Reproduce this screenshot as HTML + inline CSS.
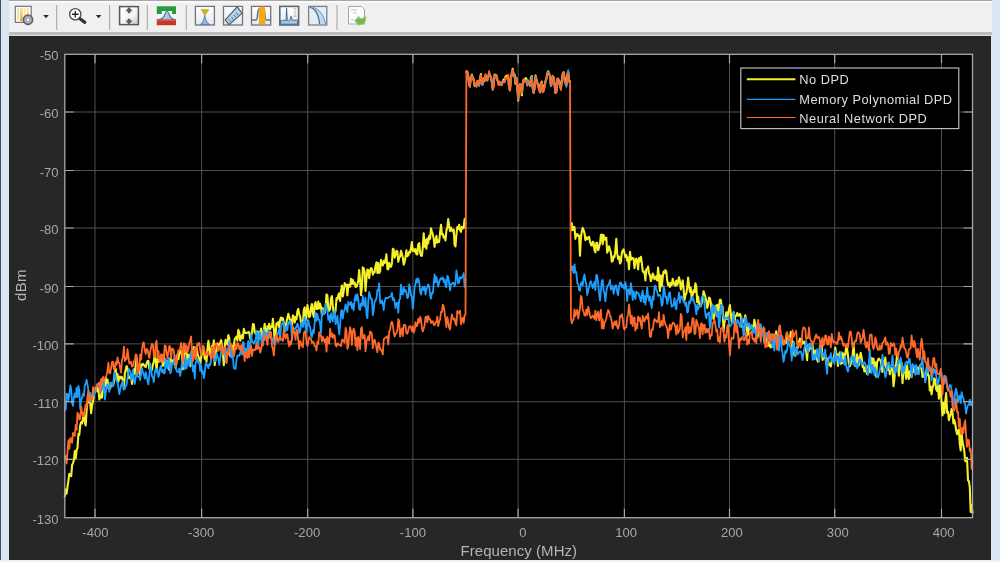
<!DOCTYPE html>
<html><head><meta charset="utf-8"><title>Spectrum Analyzer</title>
<style>
html,body{margin:0;padding:0;}
body{width:1000px;height:562px;overflow:hidden;position:relative;background:#dbe6f4;font-family:"Liberation Sans",Arial,sans-serif;}
#lb{position:absolute;left:0;top:0;width:1px;height:562px;background:#474e56;}
#tbar{position:absolute;left:9px;top:0;width:983px;height:33px;background:#f0f0f0;}
#tline0{position:absolute;left:9px;top:0;width:983px;height:3.4px;background:linear-gradient(#a4a4a4 0,#a8a8a8 22%,#f6f6f6 32%,#f9f9f9 80%,#f0f0f0 100%);}
#tline{position:absolute;left:9px;top:32.4px;width:983px;height:3.8px;background:linear-gradient(#d0d0d0 0%,#b6b6b6 20%,#b9b9b9 58%,#d9d9d9 72%,#dcdcdc 100%);}
#fig{position:absolute;left:9.3px;top:36px;width:982.2px;height:523.8px;background:#272727;}
#bot{position:absolute;left:0;top:559.8px;width:1000px;height:3px;background:#eef2f8;}
</style></head><body>
<div id="lb"></div>
<div id="tbar"></div><div id="tline0"></div><div id="tline"></div>
<div id="fig"></div>
<div id="bot"></div>
<svg width="1000" height="36" viewBox="0 0 1000 36" style="position:absolute;left:0;top:0">
<defs>
<linearGradient id="gy" x1="0" x2="0" y1="0" y2="1"><stop offset="0" stop-color="#fbe98a"/><stop offset="1" stop-color="#f0a040"/></linearGradient>
<linearGradient id="gp" x1="0" x2="1" y1="0" y2="0"><stop offset="0" stop-color="#fefefa"/><stop offset="0.5" stop-color="#fdf6d8"/><stop offset="1" stop-color="#fffef6"/></linearGradient>
<linearGradient id="gw" x1="0" x2="1" y1="0" y2="1"><stop offset="0" stop-color="#ffffff"/><stop offset="0.6" stop-color="#f4f4f4"/><stop offset="1" stop-color="#c4c4c4"/></linearGradient>
<linearGradient id="gb" x1="0" x2="0" y1="0" y2="1"><stop offset="0" stop-color="#ffffff"/><stop offset="1" stop-color="#e2ebf3"/></linearGradient>
</defs>
<!-- separators -->
<path d="M56.700 5V30M109.600 5V30M147.300 5V30M186.300 5V30M337 5V30" stroke="#a9a9a9" stroke-width="1.1"/>
<!-- icon1: settings -->
<rect x="15.300" y="6.300" width="15.900" height="16.100" fill="url(#gp)" stroke="#74748a" stroke-width="1.200"/>
<rect x="17.600" y="8" width="0.900" height="12.500" fill="#d2c688"/>
<rect x="20" y="8" width="2.600" height="13" fill="url(#gy)"/>
<rect x="24" y="8" width="1.200" height="8" fill="#f8e29a"/>
<rect x="27" y="8" width="1.300" height="7" fill="#f4d478"/>
<circle cx="28" cy="19.750" r="4.700" fill="#98989e" stroke="#5e5e66" stroke-width="1.500"/>
<circle cx="28" cy="19.750" r="2.900" fill="none" stroke="#b8b8c0" stroke-width="1"/>
<circle cx="28" cy="19.750" r="1.500" fill="#f2f2fa"/>
<!-- dropdown arrows -->
<path d="M43.200 15.100h5.600l-2.800 3.200z" fill="#2a2a2a"/>
<path d="M95.800 15.100h5.600l-2.800 3.200z" fill="#2a2a2a"/>
<!-- zoom -->
<circle cx="75.250" cy="14.250" r="5.600" fill="#fbfbfb" stroke="#505050" stroke-width="1.400"/>
<path d="M72 14.250h6.500M75.250 11v6.500" stroke="#222" stroke-width="1.300"/>
<path d="M80 18.800l4.800 3.600" stroke="#333" stroke-width="3.200" stroke-linecap="round"/>
<!-- autoscale -->
<rect x="119.600" y="6.600" width="18.800" height="18" fill="url(#gw)" stroke="#585858" stroke-width="1.500"/>
<path d="M129 6.900l3.600 4.400h-2.300v2h-2.600v-2h-2.300zM129 24.500l3.600-4h-2.300v-1.800h-2.600v1.800h-2.300z" fill="#5a5a5a"/>
<!-- spectral mask -->
<rect x="156.750" y="6.250" width="19.250" height="19" fill="#f4fbf6"/>
<path d="M156.750 6.250h19.250v7.800h-4v-3h-10.250v3h-5z" fill="#2a9a3e"/>
<path d="M157.500 19.600C162 19.600 163.300 18 164.300 15.500C165.300 13 165.800 11.300 167 11.300C168.200 11.300 168.700 13 169.700 15.500C170.700 18 172 19.600 175.500 19.600v0.500h-18z" fill="#a9c8e6" stroke="#4c6c90" stroke-width="1.100"/>
<rect x="156.750" y="19.600" width="19.250" height="5.650" fill="#c43a2a"/>
<rect x="156.750" y="19.600" width="19.250" height="0.900" fill="#d87a6a"/>
<!-- peak finder -->
<rect x="195.400" y="6.400" width="19" height="18.600" fill="url(#gb)" stroke="#74747c" stroke-width="1.300"/>
<path d="M200.500 24.300c2.500-1 3.500-5 4.250-9c0.750 4 1.750 8 4.750 9z" fill="#9bbcdc" stroke="#4a78a8" stroke-width="0.900"/>
<path d="M201 9.400h7.800l-3.900 6.200z" fill="#cdb422" stroke="#a89418" stroke-width="0.500"/>
<!-- cursor ruler -->
<rect x="223.500" y="6.400" width="19" height="18.600" fill="url(#gb)" stroke="#74747c" stroke-width="1.300"/>
<path d="M225.200 19.800L237.200 6.800l5 6.300L229 24.600z" fill="#b4d2e8" stroke="#505a66" stroke-width="1.100"/>
<path d="M230.800 21.600l-1.700-2.200M233.200 19.400l-1.700-2.200M235.600 17.200l-1.700-2.200M238 15l-1.700-2.200" stroke="#3f6490" stroke-width="1"/>
<!-- channel measurements -->
<rect x="251.500" y="6.400" width="19.200" height="18.600" fill="url(#gb)" stroke="#74747c" stroke-width="1.300"/>
<path d="M252 20h4c2.300 0 0.800-11.500 3.500-11.500h3.500c2.700 0 1.200 11.500 3.500 11.500h4" fill="none" stroke="#54708e" stroke-width="1.500"/>
<path d="M258.800 24.500V9.500c0-2 1.500-3 3.300-3s3.300 1 3.300 3V24.500z" fill="#f5a81c"/>
<!-- distortion -->
<rect x="279.800" y="6.400" width="18.800" height="18.600" fill="url(#gb)" stroke="#5a6878" stroke-width="1.600"/>
<path d="M280.600 24.200v-3.800l1.500 .6 1.500-1 1.500 .8 .9-.6 .6-12 .7 12.200 1.300 .6 1.200-.8 1.200-4 1.200 4.200 1.400-.8 1.400 1 1.400-.8 1.200 .6v3.800z" fill="#a8c8e2" stroke="#3f6288" stroke-width="0.900"/>
<path d="M293.500 8.300h3M295 8.300v8M293.500 16.300h3" stroke="#e6a888" stroke-width="0.900" fill="none"/>
<!-- ccdf -->
<rect x="308.600" y="6.400" width="18.200" height="18.600" fill="#e6ecf2" stroke="#7c8088" stroke-width="1.300"/>
<path d="M310 7.400c5 1 8.500 7 9.600 16.600h6c-1.500-9-6.500-15-12.600-16.600z" fill="#bcdaf0"/>
<path d="M310 7.400c5 1 8.500 7 9.600 16.600" fill="none" stroke="#3f6e96" stroke-width="1.200"/>
<path d="M313 7.400c6 1.600 11 7.600 12.600 16.600" fill="none" stroke="#5f8fbe" stroke-width="1"/>
<!-- doc -->
<path d="M348.500 6.500h13l3 3v14.500h-16z" fill="#fcfcfc" stroke="#a6a6a6" stroke-width="1"/>
<path d="M351 10h6M353.500 13h3M351 19.800h2.500" stroke="#bdbdbd" stroke-width="1"/>
<path d="M354.800 20.800l4.200-4.600v2.300h3.600l3-2.600v5.200l-3 3.400h-3.600v1.300z" fill="#78b450" stroke="#9ccc78" stroke-width="0.900"/>
</svg>

<svg width="983" height="524" viewBox="9 36 983 524" style="position:absolute;left:9px;top:36px;will-change:transform">
<rect x="64.8" y="54.3" width="907.7" height="463.4" fill="#000"/>
<path d="M95.0 54.3V517.7M201.6 54.3V517.7M307.7 54.3V517.7M412.9 54.3V517.7M518.1 54.3V517.7M624.4 54.3V517.7M729.5 54.3V517.7M834.7 54.3V517.7M941.5 54.3V517.7M64.8 459.3H972.5M64.8 401.7H972.5M64.8 343.9H972.5M64.8 286.5H972.5M64.8 228.0H972.5M64.8 170.5H972.5M64.8 112.0H972.5" stroke="#505050" stroke-width="1.0" fill="none"/>
<defs><filter id="bl" x="-2%" y="-2%" width="104%" height="104%"><feGaussianBlur stdDeviation="0.35"/></filter></defs>
<g fill="none" stroke-linejoin="round" stroke-linecap="round" filter="url(#bl)">
<polyline stroke="#f4f02c" stroke-width="2.1" points="64.8,496.3 65.7,489.4 66.6,493.7 67.5,487.0 68.4,480.7 69.3,473.9 70.3,475.5 71.2,476.1 72.1,465.0 73.0,463.1 73.9,460.1 74.8,451.1 75.7,458.3 76.6,450.0 77.5,448.0 78.4,433.9 79.3,434.9 80.2,425.3 81.2,422.0 82.1,423.3 83.0,418.1 83.9,413.3 84.8,421.7 85.7,425.5 86.6,410.3 87.5,401.6 88.4,402.1 89.3,399.6 90.2,402.3 91.1,413.2 92.1,405.2 93.0,401.5 93.9,395.1 94.8,391.1 95.7,389.6 96.6,387.4 97.5,391.4 98.4,387.9 99.3,399.5 100.2,392.0 101.1,397.7 102.1,397.4 103.0,384.3 103.9,388.7 104.8,384.9 105.7,377.3 106.6,386.2 107.5,379.5 108.4,388.3 109.3,387.0 110.2,388.4 111.1,383.3 112.0,384.8 113.0,386.0 113.9,382.2 114.8,372.1 115.7,368.8 116.6,379.0 117.5,374.1 118.4,381.6 119.3,376.5 120.2,378.5 121.1,376.7 122.0,377.2 123.0,381.9 123.9,389.3 124.8,373.6 125.7,369.7 126.6,366.0 127.5,368.4 128.4,377.8 129.3,378.2 130.2,376.9 131.1,374.9 132.0,384.0 132.9,372.8 133.9,369.3 134.8,374.1 135.7,365.4 136.6,358.1 137.5,365.0 138.4,366.0 139.3,369.6 140.2,376.6 141.1,364.3 142.0,365.4 142.9,363.9 143.8,364.8 144.8,366.3 145.7,367.0 146.6,363.6 147.5,361.1 148.4,360.8 149.3,369.0 150.2,369.6 151.1,369.6 152.0,369.9 152.9,364.9 153.8,361.8 154.8,353.7 155.7,360.7 156.6,370.5 157.5,359.3 158.4,360.3 159.3,361.7 160.2,359.9 161.1,357.6 162.0,358.6 162.9,365.8 163.8,355.0 164.7,363.4 165.7,364.8 166.6,361.3 167.5,360.9 168.4,366.9 169.3,370.0 170.2,358.2 171.1,360.0 172.0,361.7 172.9,360.2 173.8,361.6 174.7,359.1 175.7,368.2 176.6,361.5 177.5,354.7 178.4,359.3 179.3,353.1 180.2,351.0 181.1,352.1 182.0,355.6 182.9,369.1 183.8,356.5 184.7,352.7 185.6,347.6 186.6,353.6 187.5,362.5 188.4,354.9 189.3,354.5 190.2,366.2 191.1,356.0 192.0,353.0 192.9,350.3 193.8,346.9 194.7,352.3 195.6,357.8 196.5,346.9 197.5,353.5 198.4,356.7 199.3,359.0 200.2,363.3 201.1,357.2 202.0,353.4 202.9,350.4 203.8,350.5 204.7,358.7 205.6,356.7 206.5,361.7 207.5,348.5 208.4,340.8 209.3,348.2 210.2,354.3 211.1,349.9 212.0,345.9 212.9,349.9 213.8,340.4 214.7,365.2 215.6,358.0 216.5,349.6 217.4,343.2 218.4,345.6 219.3,345.2 220.2,342.9 221.1,340.1 222.0,347.1 222.9,354.5 223.8,365.2 224.7,346.3 225.6,339.7 226.5,343.0 227.4,344.6 228.3,335.1 229.3,338.0 230.2,356.2 231.1,346.5 232.0,345.7 232.9,352.4 233.8,346.1 234.7,339.2 235.6,337.9 236.5,336.7 237.4,340.4 238.3,329.9 239.3,332.4 240.2,340.6 241.1,337.6 242.0,335.1 242.9,338.4 243.8,328.8 244.7,331.9 245.6,333.0 246.5,333.0 247.4,332.7 248.3,332.0 249.2,332.3 250.2,338.8 251.1,336.4 252.0,332.5 252.9,324.0 253.8,324.5 254.7,332.0 255.6,333.7 256.5,331.7 257.4,331.5 258.3,332.2 259.2,338.7 260.2,332.1 261.1,328.6 262.0,339.5 262.9,336.4 263.8,330.4 264.7,323.9 265.6,334.4 266.5,338.4 267.4,326.4 268.3,329.0 269.2,323.9 270.1,329.2 271.1,326.5 272.0,327.0 272.9,318.9 273.8,328.6 274.7,339.8 275.6,334.1 276.5,323.3 277.4,324.7 278.3,322.1 279.2,327.1 280.1,320.0 281.0,317.5 282.0,320.0 282.9,318.2 283.8,322.7 284.7,330.1 285.6,326.0 286.5,322.1 287.4,318.0 288.3,313.9 289.2,317.1 290.1,320.7 291.0,319.8 292.0,325.0 292.9,315.4 293.8,316.7 294.7,322.5 295.6,317.0 296.5,319.3 297.4,311.2 298.3,308.9 299.2,314.3 300.1,316.4 301.0,322.5 301.9,321.9 302.9,323.6 303.8,310.1 304.7,307.4 305.6,320.3 306.5,314.4 307.4,305.1 308.3,310.5 309.2,317.1 310.1,316.1 311.0,307.8 311.9,304.1 312.9,313.3 313.8,317.0 314.7,304.1 315.6,302.1 316.5,308.9 317.4,308.9 318.3,301.6 319.2,308.4 320.1,303.9 321.0,306.7 321.9,315.1 322.8,308.2 323.8,313.9 324.7,312.9 325.6,309.2 326.5,294.2 327.4,295.6 328.3,309.0 329.2,310.9 330.1,309.0 331.0,298.2 331.9,296.2 332.8,305.7 333.7,313.3 334.7,313.3 335.6,310.5 336.5,298.0 337.4,299.4 338.3,295.2 339.2,293.3 340.1,300.9 341.0,291.8 341.9,285.5 342.8,296.5 343.7,291.3 344.7,283.0 345.6,285.8 346.5,284.7 347.4,295.3 348.3,284.5 349.2,286.4 350.1,286.7 351.0,278.8 351.9,284.0 352.8,279.7 353.7,283.7 354.6,282.6 355.6,286.9 356.5,286.7 357.4,284.4 358.3,280.5 359.2,270.0 360.1,280.1 361.0,295.2 361.9,287.7 362.8,267.4 363.7,268.3 364.6,271.9 365.5,290.9 366.5,278.5 367.4,269.5 368.3,270.1 369.2,278.1 370.1,270.6 371.0,268.0 371.9,269.1 372.8,274.6 373.7,272.2 374.6,272.5 375.5,266.0 376.5,262.3 377.4,273.0 378.3,263.1 379.2,273.0 380.1,271.5 381.0,259.9 381.9,264.4 382.8,265.5 383.7,260.9 384.6,263.1 385.5,259.9 386.4,254.3 387.4,269.0 388.3,269.4 389.2,262.7 390.1,266.8 391.0,266.7 391.9,263.5 392.8,248.7 393.7,249.6 394.6,257.7 395.5,255.1 396.4,250.9 397.4,251.3 398.3,261.8 399.2,257.5 400.1,256.7 401.0,250.7 401.9,253.9 402.8,257.6 403.7,264.6 404.6,262.1 405.5,257.3 406.4,250.4 407.3,256.1 408.3,255.4 409.2,251.8 410.1,252.6 411.0,248.0 411.9,242.0 412.8,250.9 413.7,249.4 414.6,251.6 415.5,249.0 416.4,254.3 417.3,254.5 418.2,244.6 419.2,243.1 420.1,252.7 421.0,255.7 421.9,255.8 422.8,247.3 423.7,233.4 424.6,246.8 425.5,240.0 426.4,248.6 427.3,238.6 428.2,243.4 429.2,235.9 430.1,239.0 431.0,228.2 431.9,231.5 432.8,234.4 433.7,238.6 434.6,246.9 435.5,241.4 436.4,235.9 437.3,242.7 438.2,240.5 439.1,242.0 440.1,232.6 441.0,224.8 441.9,234.2 442.8,233.9 443.7,237.7 444.6,236.3 445.5,240.4 446.4,230.3 447.3,227.8 448.2,219.1 449.1,225.4 450.1,231.0 451.0,227.5 451.9,230.5 452.8,231.4 453.7,229.6 454.6,245.0 455.5,246.3 456.4,234.3 457.3,227.1 458.2,228.8 459.1,224.7 460.0,230.2 461.0,231.8 461.9,226.7 462.8,228.3 463.7,228.2 464.6,218.8 465.5,223.1"/>
<polyline stroke="#f4f02c" stroke-width="2.1" points="466.4,71.7 467.3,71.5 468.2,76.1 469.1,84.0 470.0,83.7 470.9,77.3 471.9,74.6 472.8,77.9 473.7,79.7 474.6,85.8 475.5,83.8 476.4,84.5 477.3,82.1 478.2,81.6 479.1,84.1 480.0,78.8 480.9,74.0 481.9,84.5 482.8,83.6 483.7,78.5 484.6,81.1 485.5,75.4 486.4,76.5 487.3,80.2 488.2,76.9 489.1,73.5 490.0,75.4 490.9,76.6 491.8,81.3 492.8,89.2 493.7,83.3 494.6,74.6 495.5,74.9 496.4,75.4 497.3,80.1 498.2,81.3 499.1,82.7 500.0,84.6 500.9,82.3 501.8,83.7 502.7,82.1 503.7,79.4 504.6,80.6 505.5,76.5 506.4,75.7 507.3,76.1 508.2,76.0 509.1,88.2 510.0,90.3 510.9,78.6 511.8,73.0 512.7,68.8 513.7,75.5 514.6,74.7 515.5,83.8 516.4,77.9 517.3,86.2 518.2,100.8 519.1,87.1 520.0,84.4 520.9,85.6 521.8,95.3 522.7,84.5 523.6,79.8 524.6,81.3 525.5,78.1 526.4,78.6 527.3,84.1 528.2,81.2 529.1,83.1 530.0,85.6 530.9,77.9 531.8,76.0 532.7,87.9 533.6,92.9 534.6,87.1 535.5,75.5 536.4,78.9 537.3,82.7 538.2,84.4 539.1,87.9 540.0,92.4 540.9,82.9 541.8,81.7 542.7,91.2 543.6,88.6 544.5,85.4 545.5,81.2 546.4,78.4 547.3,73.4 548.2,71.3 549.1,73.9 550.0,76.2 550.9,85.9 551.8,81.6 552.7,76.0 553.6,77.6 554.5,83.1 555.4,92.8 556.4,91.6 557.3,79.1 558.2,79.2 559.1,80.7 560.0,85.5 560.9,88.4 561.8,80.6 562.7,73.6 563.6,72.2 564.5,77.0 565.4,80.9 566.4,85.4 567.3,74.5 568.2,71.9 569.1,81.7 570.0,81.1"/>
<polyline stroke="#f4f02c" stroke-width="2.1" points="570.9,230.2 571.8,223.1 572.7,230.1 573.6,227.3 574.5,227.0 575.4,238.9 576.3,234.2 577.3,234.0 578.2,236.2 579.1,235.5 580.0,255.6 580.9,238.5 581.8,231.2 582.7,227.9 583.6,230.1 584.5,233.1 585.4,240.1 586.3,237.3 587.2,239.1 588.2,237.7 589.1,236.8 590.0,241.7 590.9,244.5 591.8,245.6 592.7,241.7 593.6,242.4 594.5,250.2 595.4,252.4 596.3,243.1 597.2,242.8 598.2,250.3 599.1,247.2 600.0,243.6 600.9,235.0 601.8,234.5 602.7,244.2 603.6,235.1 604.5,239.7 605.4,238.4 606.3,237.6 607.2,252.7 608.1,250.4 609.1,246.2 610.0,249.7 610.9,252.6 611.8,261.7 612.7,261.0 613.6,256.3 614.5,257.1 615.4,250.1 616.3,238.9 617.2,253.4 618.1,258.9 619.1,256.6 620.0,263.5 620.9,261.9 621.8,252.9 622.7,250.6 623.6,249.4 624.5,253.3 625.4,257.0 626.3,255.0 627.2,260.9 628.1,257.4 629.0,269.3 630.0,251.8 630.9,259.8 631.8,257.7 632.7,258.7 633.6,258.4 634.5,268.2 635.4,261.5 636.3,258.5 637.2,261.0 638.1,269.3 639.0,258.1 639.9,261.3 640.9,256.7 641.8,262.8 642.7,271.0 643.6,272.4 644.5,271.5 645.4,280.4 646.3,269.3 647.2,269.4 648.1,266.6 649.0,273.7 649.9,274.8 650.9,281.0 651.8,278.1 652.7,273.5 653.6,275.4 654.5,279.3 655.4,278.5 656.3,276.3 657.2,280.5 658.1,267.6 659.0,277.5 659.9,290.9 660.8,275.3 661.8,286.1 662.7,277.5 663.6,271.5 664.5,272.9 665.4,270.2 666.3,271.6 667.2,280.5 668.1,285.2 669.0,283.2 669.9,287.0 670.8,282.7 671.8,284.9 672.7,278.7 673.6,282.4 674.5,285.2 675.4,285.7 676.3,280.5 677.2,284.9 678.1,282.3 679.0,277.4 679.9,281.0 680.8,289.5 681.7,284.4 682.7,280.4 683.6,289.1 684.5,300.1 685.4,295.4 686.3,293.5 687.2,287.6 688.1,277.5 689.0,285.0 689.9,291.9 690.8,287.8 691.7,298.3 692.6,295.3 693.6,290.4 694.5,292.2 695.4,283.4 696.3,286.5 697.2,302.3 698.1,296.6 699.0,303.0 699.9,305.6 700.8,305.9 701.7,302.9 702.6,299.0 703.6,291.2 704.5,294.1 705.4,297.3 706.3,300.7 707.2,307.9 708.1,305.1 709.0,297.6 709.9,298.3 710.8,302.7 711.7,312.7 712.6,307.4 713.5,318.9 714.5,315.7 715.4,305.9 716.3,307.9 717.2,304.8 718.1,317.2 719.0,306.8 719.9,299.8 720.8,299.8 721.7,306.3 722.6,306.7 723.5,331.7 724.4,323.2 725.4,316.7 726.3,312.3 727.2,319.0 728.1,313.3 729.0,309.2 729.9,305.0 730.8,313.8 731.7,322.0 732.6,316.2 733.5,312.2 734.4,322.9 735.4,315.9 736.3,315.7 737.2,313.1 738.1,315.6 739.0,315.4 739.9,313.9 740.8,316.2 741.7,326.6 742.6,321.0 743.5,321.8 744.4,319.4 745.3,315.3 746.3,324.4 747.2,335.5 748.1,334.4 749.0,323.7 749.9,329.1 750.8,327.5 751.7,325.7 752.6,326.6 753.5,327.0 754.4,319.7 755.3,324.7 756.3,333.8 757.2,337.8 758.1,335.3 759.0,325.5 759.9,324.6 760.8,327.5 761.7,331.4 762.6,329.8 763.5,334.5 764.4,342.0 765.3,336.0 766.2,339.2 767.2,341.6 768.1,345.7 769.0,341.8 769.9,346.3 770.8,347.5 771.7,344.8 772.6,345.7 773.5,339.0 774.4,342.0 775.3,338.0 776.2,331.2 777.1,336.8 778.1,340.9 779.0,337.5 779.9,340.1 780.8,340.9 781.7,340.0 782.6,342.1 783.5,344.5 784.4,343.6 785.3,340.4 786.2,342.8 787.1,334.8 788.1,338.2 789.0,339.0 789.9,338.3 790.8,331.9 791.7,338.0 792.6,352.8 793.5,341.9 794.4,355.5 795.3,355.8 796.2,351.1 797.1,346.8 798.0,347.5 799.0,341.7 799.9,338.7 800.8,345.4 801.7,338.6 802.6,343.7 803.5,343.2 804.4,341.4 805.3,344.2 806.2,351.2 807.1,360.2 808.0,345.4 809.0,350.8 809.9,344.2 810.8,345.2 811.7,349.3 812.6,345.6 813.5,353.8 814.4,358.8 815.3,350.5 816.2,353.6 817.1,359.7 818.0,361.7 818.9,361.1 819.9,346.1 820.8,346.3 821.7,344.9 822.6,359.9 823.5,357.8 824.4,353.9 825.3,355.7 826.2,364.1 827.1,358.5 828.0,360.0 828.9,365.0 829.8,364.2 830.8,366.6 831.7,360.6 832.6,358.3 833.5,360.0 834.4,354.1 835.3,347.6 836.2,353.6 837.1,354.1 838.0,365.9 838.9,355.2 839.8,352.3 840.8,364.0 841.7,352.5 842.6,362.9 843.5,353.6 844.4,358.7 845.3,354.9 846.2,345.7 847.1,348.8 848.0,355.3 848.9,364.2 849.8,366.3 850.7,363.9 851.7,360.6 852.6,355.6 853.5,343.4 854.4,356.0 855.3,366.2 856.2,365.0 857.1,354.3 858.0,358.7 858.9,365.4 859.8,358.3 860.7,352.8 861.6,357.1 862.6,366.9 863.5,366.4 864.4,371.4 865.3,367.4 866.2,371.1 867.1,374.2 868.0,365.8 868.9,368.3 869.8,372.2 870.7,362.0 871.6,358.1 872.6,364.5 873.5,358.5 874.4,366.1 875.3,362.2 876.2,376.7 877.1,362.6 878.0,359.6 878.9,358.6 879.8,359.9 880.7,360.5 881.6,367.1 882.5,372.0 883.5,361.0 884.4,365.2 885.3,357.6 886.2,367.8 887.1,366.4 888.0,369.9 888.9,365.2 889.8,374.3 890.7,368.1 891.6,367.8 892.5,369.6 893.5,386.3 894.4,379.1 895.3,366.7 896.2,363.9 897.1,355.1 898.0,368.0 898.9,375.7 899.8,366.1 900.7,360.0 901.6,363.5 902.5,383.2 903.4,372.6 904.4,369.0 905.3,368.1 906.2,378.8 907.1,365.4 908.0,374.3 908.9,379.0 909.8,371.4 910.7,370.6 911.6,377.1 912.5,366.6 913.4,368.3 914.3,372.4 915.3,369.8 916.2,368.3 917.1,367.4 918.0,369.5 918.9,370.3 919.8,365.8 920.7,367.9 921.6,368.7 922.5,377.0 923.4,375.8 924.3,374.4 925.3,379.7 926.2,373.0 927.1,364.6 928.0,375.5 928.9,375.5 929.8,390.4 930.7,386.5 931.6,394.4 932.5,387.5 933.4,385.2 934.3,378.4 935.2,379.8 936.2,389.4 937.1,391.0 938.0,386.1 938.9,398.8 939.8,385.3 940.7,387.0 941.6,403.1 942.5,415.5 943.4,402.7 944.3,413.1 945.2,401.6 946.2,393.1 947.1,412.7 948.0,411.5 948.9,420.3 949.8,416.8 950.7,414.0 951.6,409.0 952.5,413.1 953.4,423.5 954.3,420.0 955.2,423.5 956.1,430.0 957.1,434.2 958.0,430.6 958.9,429.4 959.8,443.6 960.7,450.5 961.6,433.0 962.5,441.5 963.4,446.0 964.3,451.4 965.2,460.8 966.1,461.3 967.0,457.8 968.0,480.5 968.9,481.2 969.8,487.1 970.7,512.0 971.6,505.0 972.5,512.7"/>
<polyline stroke="#1a9fff" stroke-width="1.8" points="64.8,410.2 65.7,409.4 66.6,393.7 67.5,394.1 68.4,400.5 69.3,395.0 70.3,385.5 71.2,389.0 72.1,403.3 73.0,405.9 73.9,397.1 74.8,393.3 75.7,397.4 76.6,387.8 77.5,397.2 78.4,385.8 79.3,390.1 80.2,408.9 81.2,400.0 82.1,397.6 83.0,393.7 83.9,396.0 84.8,385.2 85.7,383.6 86.6,379.6 87.5,384.6 88.4,390.3 89.3,401.2 90.2,392.9 91.1,400.7 92.1,398.6 93.0,390.8 93.9,395.3 94.8,393.1 95.7,388.5 96.6,386.0 97.5,383.6 98.4,383.9 99.3,386.6 100.2,393.5 101.1,386.6 102.1,389.4 103.0,383.2 103.9,381.2 104.8,399.5 105.7,393.4 106.6,387.1 107.5,384.3 108.4,385.9 109.3,391.8 110.2,382.5 111.1,383.4 112.0,384.5 113.0,386.4 113.9,377.1 114.8,372.5 115.7,376.8 116.6,381.2 117.5,382.6 118.4,387.5 119.3,394.2 120.2,389.9 121.1,385.0 122.0,382.9 123.0,381.1 123.9,389.6 124.8,389.0 125.7,386.3 126.6,384.9 127.5,377.7 128.4,370.7 129.3,369.3 130.2,371.1 131.1,380.2 132.0,378.4 132.9,370.0 133.9,380.7 134.8,384.0 135.7,377.4 136.6,372.5 137.5,376.3 138.4,377.1 139.3,376.1 140.2,380.2 141.1,370.4 142.0,367.9 142.9,372.6 143.8,374.7 144.8,378.7 145.7,372.1 146.6,376.6 147.5,380.7 148.4,384.4 149.3,375.5 150.2,363.5 151.1,368.7 152.0,376.3 152.9,377.2 153.8,382.1 154.8,372.3 155.7,368.7 156.6,372.3 157.5,369.5 158.4,377.0 159.3,374.2 160.2,367.6 161.1,365.6 162.0,372.1 162.9,369.9 163.8,373.4 164.7,372.9 165.7,358.6 166.6,366.3 167.5,368.5 168.4,358.0 169.3,360.1 170.2,373.3 171.1,371.7 172.0,362.9 172.9,364.2 173.8,362.9 174.7,355.3 175.7,364.8 176.6,371.1 177.5,371.8 178.4,372.2 179.3,368.5 180.2,375.8 181.1,370.4 182.0,362.7 182.9,365.6 183.8,365.4 184.7,369.3 185.6,357.0 186.6,368.3 187.5,362.1 188.4,358.9 189.3,366.0 190.2,356.8 191.1,350.9 192.0,362.1 192.9,371.3 193.8,365.7 194.7,378.6 195.6,363.6 196.5,361.0 197.5,358.9 198.4,362.8 199.3,361.8 200.2,370.9 201.1,365.4 202.0,373.1 202.9,371.1 203.8,378.1 204.7,373.7 205.6,363.7 206.5,363.4 207.5,366.2 208.4,368.2 209.3,364.0 210.2,365.0 211.1,360.2 212.0,355.6 212.9,356.7 213.8,357.2 214.7,361.3 215.6,360.6 216.5,353.1 217.4,355.9 218.4,358.9 219.3,365.0 220.2,358.4 221.1,351.2 222.0,349.2 222.9,349.9 223.8,349.1 224.7,349.7 225.6,360.9 226.5,362.6 227.4,350.5 228.3,347.7 229.3,341.2 230.2,349.9 231.1,357.6 232.0,351.0 232.9,356.9 233.8,368.1 234.7,368.7 235.6,368.9 236.5,359.3 237.4,355.8 238.3,355.1 239.3,355.9 240.2,353.1 241.1,348.8 242.0,354.6 242.9,342.0 243.8,342.9 244.7,355.8 245.6,348.7 246.5,355.0 247.4,348.1 248.3,340.8 249.2,350.7 250.2,344.7 251.1,334.4 252.0,341.9 252.9,341.6 253.8,343.4 254.7,341.2 255.6,341.0 256.5,330.7 257.4,336.5 258.3,346.2 259.2,332.7 260.2,332.3 261.1,339.5 262.0,344.3 262.9,336.4 263.8,329.6 264.7,340.5 265.6,332.3 266.5,335.6 267.4,337.6 268.3,330.1 269.2,331.5 270.1,338.1 271.1,336.0 272.0,341.7 272.9,338.4 273.8,342.7 274.7,344.9 275.6,342.3 276.5,339.7 277.4,333.8 278.3,332.6 279.2,328.6 280.1,340.3 281.0,326.4 282.0,324.6 282.9,321.3 283.8,322.7 284.7,330.7 285.6,331.5 286.5,325.9 287.4,330.1 288.3,322.0 289.2,323.9 290.1,321.2 291.0,323.3 292.0,340.5 292.9,332.6 293.8,328.4 294.7,329.2 295.6,327.9 296.5,327.0 297.4,323.6 298.3,326.3 299.2,332.9 300.1,331.8 301.0,324.1 301.9,322.2 302.9,327.1 303.8,321.4 304.7,317.2 305.6,327.5 306.5,332.0 307.4,321.1 308.3,320.2 309.2,326.1 310.1,326.6 311.0,335.5 311.9,336.9 312.9,330.2 313.8,333.2 314.7,322.4 315.6,312.7 316.5,321.0 317.4,313.8 318.3,319.6 319.2,319.6 320.1,323.8 321.0,333.3 321.9,312.9 322.8,309.8 323.8,314.3 324.7,312.2 325.6,304.0 326.5,309.3 327.4,309.1 328.3,319.8 329.2,315.9 330.1,322.3 331.0,313.3 331.9,317.1 332.8,321.7 333.7,313.6 334.7,310.6 335.6,324.2 336.5,321.1 337.4,316.0 338.3,325.9 339.2,334.5 340.1,326.5 341.0,311.7 341.9,310.0 342.8,318.6 343.7,311.8 344.7,309.6 345.6,304.5 346.5,307.7 347.4,312.1 348.3,302.0 349.2,303.6 350.1,305.1 351.0,302.0 351.9,308.3 352.8,303.9 353.7,310.3 354.6,299.5 355.6,295.1 356.5,300.6 357.4,294.1 358.3,299.2 359.2,309.4 360.1,309.8 361.0,303.3 361.9,305.9 362.8,296.0 363.7,304.0 364.6,306.2 365.5,297.7 366.5,315.1 367.4,318.2 368.3,301.1 369.2,291.9 370.1,295.2 371.0,299.1 371.9,298.8 372.8,315.1 373.7,310.6 374.6,301.3 375.5,300.9 376.5,298.0 377.4,290.1 378.3,290.8 379.2,283.2 380.1,302.4 381.0,303.4 381.9,300.4 382.8,303.4 383.7,310.0 384.6,301.9 385.5,298.1 386.4,297.9 387.4,298.1 388.3,297.6 389.2,297.0 390.1,296.7 391.0,296.3 391.9,292.8 392.8,300.0 393.7,298.1 394.6,301.2 395.5,308.2 396.4,303.2 397.4,302.7 398.3,312.8 399.2,300.0 400.1,298.8 401.0,284.6 401.9,294.0 402.8,294.4 403.7,287.3 404.6,291.3 405.5,289.9 406.4,293.2 407.3,298.0 408.3,297.0 409.2,284.4 410.1,288.0 411.0,295.4 411.9,296.6 412.8,308.9 413.7,299.0 414.6,287.1 415.5,284.1 416.4,279.0 417.3,282.4 418.2,278.4 419.2,281.8 420.1,290.9 421.0,294.5 421.9,288.8 422.8,286.8 423.7,290.0 424.6,286.7 425.5,294.5 426.4,289.3 427.3,287.4 428.2,284.4 429.2,286.4 430.1,294.8 431.0,298.7 431.9,292.8 432.8,293.1 433.7,284.2 434.6,274.3 435.5,282.4 436.4,276.9 437.3,281.0 438.2,286.7 439.1,283.0 440.1,279.3 441.0,278.1 441.9,279.1 442.8,277.4 443.7,281.9 444.6,279.3 445.5,285.5 446.4,287.3 447.3,275.8 448.2,276.9 449.1,283.1 450.1,290.4 451.0,284.0 451.9,284.0 452.8,282.8 453.7,283.0 454.6,286.3 455.5,282.3 456.4,270.5 457.3,275.8 458.2,283.3 459.1,282.5 460.0,277.2 461.0,278.3 461.9,277.5 462.8,275.8 463.7,273.3 464.6,286.9 465.5,279.4"/>
<polyline stroke="#1a9fff" stroke-width="1.8" points="466.4,72.0 467.3,72.4 468.2,75.8 469.1,85.9 470.0,85.3 470.9,76.9 471.9,75.5 472.8,79.5 473.7,80.3 474.6,84.4 475.5,84.8 476.4,85.8 477.3,82.1 478.2,85.6 479.1,86.2 480.0,81.9 480.9,76.0 481.9,84.2 482.8,85.0 483.7,78.4 484.6,79.7 485.5,75.3 486.4,77.0 487.3,80.9 488.2,76.7 489.1,72.5 490.0,75.8 490.9,76.6 491.8,82.7 492.8,90.2 493.7,84.6 494.6,75.1 495.5,76.1 496.4,77.9 497.3,80.4 498.2,82.3 499.1,81.4 500.0,84.2 500.9,81.8 501.8,83.4 502.7,83.0 503.7,81.4 504.6,82.3 505.5,78.4 506.4,78.1 507.3,77.4 508.2,78.8 509.1,88.6 510.0,88.6 510.9,80.0 511.8,72.7 512.7,70.3 513.7,74.6 514.6,77.2 515.5,81.6 516.4,78.1 517.3,86.2 518.2,99.8 519.1,88.4 520.0,84.8 520.9,84.9 521.8,92.5 522.7,85.9 523.6,82.3 524.6,81.7 525.5,80.2 526.4,80.9 527.3,85.9 528.2,80.3 529.1,84.3 530.0,86.2 530.9,81.7 531.8,76.7 532.7,86.8 533.6,92.6 534.6,89.8 535.5,75.3 536.4,81.3 537.3,83.9 538.2,87.2 539.1,89.4 540.0,91.4 540.9,84.1 541.8,83.6 542.7,90.3 543.6,91.9 544.5,87.3 545.5,80.7 546.4,79.1 547.3,75.6 548.2,72.2 549.1,72.3 550.0,77.1 550.9,85.8 551.8,84.8 552.7,76.4 553.6,78.5 554.5,84.7 555.4,92.1 556.4,92.1 557.3,78.7 558.2,78.3 559.1,83.4 560.0,86.2 560.9,88.1 561.8,80.6 562.7,75.3 563.6,73.5 564.5,80.0 565.4,84.5 566.4,86.9 567.3,74.9 568.2,70.1 569.1,81.4 570.0,81.2"/>
<polyline stroke="#1a9fff" stroke-width="1.8" points="570.9,266.3 571.8,270.0 572.7,266.5 573.6,273.1 574.5,264.3 575.4,272.7 576.3,272.1 577.3,283.0 578.2,284.3 579.1,290.1 580.0,290.8 580.9,283.7 581.8,282.1 582.7,285.4 583.6,278.3 584.5,274.4 585.4,280.6 586.3,284.6 587.2,295.0 588.2,290.3 589.1,287.2 590.0,282.8 590.9,281.2 591.8,284.0 592.7,288.2 593.6,286.1 594.5,282.0 595.4,290.2 596.3,274.7 597.2,275.6 598.2,284.0 599.1,293.5 600.0,300.7 600.9,291.0 601.8,280.9 602.7,280.0 603.6,290.8 604.5,293.5 605.4,301.4 606.3,292.1 607.2,286.5 608.1,285.3 609.1,283.4 610.0,280.0 610.9,289.6 611.8,288.1 612.7,285.8 613.6,293.9 614.5,289.5 615.4,285.5 616.3,285.5 617.2,292.2 618.1,295.2 619.1,286.1 620.0,282.8 620.9,282.4 621.8,287.0 622.7,284.6 623.6,287.8 624.5,288.8 625.4,282.1 626.3,287.4 627.2,301.1 628.1,289.3 629.0,289.4 630.0,294.8 630.9,283.1 631.8,289.4 632.7,300.0 633.6,291.3 634.5,295.4 635.4,299.0 636.3,291.4 637.2,293.0 638.1,292.8 639.0,294.9 639.9,297.6 640.9,301.4 641.8,295.0 642.7,290.7 643.6,302.1 644.5,295.9 645.4,304.6 646.3,297.1 647.2,287.7 648.1,296.2 649.0,300.7 649.9,296.3 650.9,303.8 651.8,308.0 652.7,296.4 653.6,299.8 654.5,286.5 655.4,285.7 656.3,290.1 657.2,291.5 658.1,295.9 659.0,294.7 659.9,295.0 660.8,297.4 661.8,305.8 662.7,303.8 663.6,285.8 664.5,289.9 665.4,297.3 666.3,296.7 667.2,303.8 668.1,299.5 669.0,293.3 669.9,292.2 670.8,300.8 671.8,306.9 672.7,305.8 673.6,305.2 674.5,298.2 675.4,306.6 676.3,309.4 677.2,300.3 678.1,299.5 679.0,292.5 679.9,302.9 680.8,296.8 681.7,296.1 682.7,298.7 683.6,302.1 684.5,301.5 685.4,305.8 686.3,302.6 687.2,312.5 688.1,311.6 689.0,301.7 689.9,303.2 690.8,298.2 691.7,300.5 692.6,296.9 693.6,300.2 694.5,302.9 695.4,306.2 696.3,314.3 697.2,304.9 698.1,309.4 699.0,306.6 699.9,305.8 700.8,306.9 701.7,296.9 702.6,296.3 703.6,296.5 704.5,303.8 705.4,314.7 706.3,318.4 707.2,314.0 708.1,313.2 709.0,312.4 709.9,328.7 710.8,323.5 711.7,309.9 712.6,304.4 713.5,313.5 714.5,310.3 715.4,306.4 716.3,311.2 717.2,317.0 718.1,311.6 719.0,327.6 719.9,321.2 720.8,304.9 721.7,305.4 722.6,315.7 723.5,316.2 724.4,319.6 725.4,317.9 726.3,318.0 727.2,317.6 728.1,317.3 729.0,322.9 729.9,326.5 730.8,325.4 731.7,323.8 732.6,321.3 733.5,311.6 734.4,323.7 735.4,329.9 736.3,327.6 737.2,319.9 738.1,321.1 739.0,323.1 739.9,326.8 740.8,325.7 741.7,317.2 742.6,322.6 743.5,336.7 744.4,331.8 745.3,317.4 746.3,318.3 747.2,326.0 748.1,324.2 749.0,323.4 749.9,328.1 750.8,328.6 751.7,324.8 752.6,330.0 753.5,332.9 754.4,327.5 755.3,331.3 756.3,338.4 757.2,337.5 758.1,327.8 759.0,326.3 759.9,325.0 760.8,324.4 761.7,335.0 762.6,332.2 763.5,326.8 764.4,343.0 765.3,339.6 766.2,333.5 767.2,332.7 768.1,336.3 769.0,337.6 769.9,333.6 770.8,336.8 771.7,337.3 772.6,347.4 773.5,341.4 774.4,350.7 775.3,338.6 776.2,335.0 777.1,337.1 778.1,345.7 779.0,350.7 779.9,335.3 780.8,336.0 781.7,348.8 782.6,353.6 783.5,361.9 784.4,357.5 785.3,350.9 786.2,352.8 787.1,350.1 788.1,340.8 789.0,345.0 789.9,345.3 790.8,349.5 791.7,360.8 792.6,349.4 793.5,342.5 794.4,351.1 795.3,355.6 796.2,347.4 797.1,349.8 798.0,354.4 799.0,352.6 799.9,351.5 800.8,351.4 801.7,354.6 802.6,360.2 803.5,353.0 804.4,347.9 805.3,345.1 806.2,341.2 807.1,350.0 808.0,352.6 809.0,344.1 809.9,346.7 810.8,345.0 811.7,341.7 812.6,359.9 813.5,358.5 814.4,354.7 815.3,358.6 816.2,355.5 817.1,349.1 818.0,357.8 818.9,361.5 819.9,347.2 820.8,347.6 821.7,352.6 822.6,354.4 823.5,357.0 824.4,355.5 825.3,349.3 826.2,364.6 827.1,373.9 828.0,361.8 828.9,357.0 829.8,358.0 830.8,353.1 831.7,361.2 832.6,361.2 833.5,358.1 834.4,364.1 835.3,350.6 836.2,360.0 837.1,357.1 838.0,356.2 838.9,363.3 839.8,362.9 840.8,352.4 841.7,361.3 842.6,360.3 843.5,360.5 844.4,364.8 845.3,356.4 846.2,365.4 847.1,369.2 848.0,371.7 848.9,365.2 849.8,363.3 850.7,358.5 851.7,355.9 852.6,358.2 853.5,364.8 854.4,356.6 855.3,365.8 856.2,363.1 857.1,368.3 858.0,366.4 858.9,361.8 859.8,359.1 860.7,360.6 861.6,364.2 862.6,362.7 863.5,364.0 864.4,362.1 865.3,363.6 866.2,367.9 867.1,371.6 868.0,374.8 868.9,361.8 869.8,349.5 870.7,365.5 871.6,373.2 872.6,364.9 873.5,367.6 874.4,375.2 875.3,368.2 876.2,371.2 877.1,376.9 878.0,377.5 878.9,374.2 879.8,371.1 880.7,365.8 881.6,364.1 882.5,354.8 883.5,366.9 884.4,370.8 885.3,377.3 886.2,375.4 887.1,364.7 888.0,362.8 888.9,362.4 889.8,369.4 890.7,365.8 891.6,365.5 892.5,355.4 893.5,368.1 894.4,367.5 895.3,374.0 896.2,367.1 897.1,370.7 898.0,360.4 898.9,361.1 899.8,361.5 900.7,357.6 901.6,367.1 902.5,373.6 903.4,366.6 904.4,371.2 905.3,363.4 906.2,362.0 907.1,362.0 908.0,363.8 908.9,359.5 909.8,359.0 910.7,368.9 911.6,376.8 912.5,363.8 913.4,366.2 914.3,365.6 915.3,374.8 916.2,365.0 917.1,374.1 918.0,371.6 918.9,374.3 919.8,368.3 920.7,363.6 921.6,365.0 922.5,356.7 923.4,371.2 924.3,373.0 925.3,382.4 926.2,375.7 927.1,364.2 928.0,372.1 928.9,371.1 929.8,366.6 930.7,369.5 931.6,380.7 932.5,375.1 933.4,368.8 934.3,372.6 935.2,369.4 936.2,375.4 937.1,380.6 938.0,384.9 938.9,380.2 939.8,375.5 940.7,371.2 941.6,372.9 942.5,385.8 943.4,381.5 944.3,383.7 945.2,376.2 946.2,377.4 947.1,387.3 948.0,390.8 948.9,387.9 949.8,385.0 950.7,385.4 951.6,390.4 952.5,394.2 953.4,406.1 954.3,403.2 955.2,392.1 956.1,388.5 957.1,394.3 958.0,402.4 958.9,396.5 959.8,395.7 960.7,403.2 961.6,392.1 962.5,396.5 963.4,398.1 964.3,402.7 965.2,404.5 966.1,413.7 967.0,408.2 968.0,405.2 968.9,404.7 969.8,399.7 970.7,405.3 971.6,404.3 972.5,402.5"/>
<polyline stroke="#ff6a2c" stroke-width="1.8" points="64.8,457.5 65.7,455.9 66.6,463.6 67.5,452.0 68.4,440.2 69.3,448.9 70.3,438.1 71.2,438.6 72.1,442.9 73.0,432.9 73.9,435.0 74.8,436.0 75.7,424.8 76.6,429.9 77.5,413.0 78.4,413.9 79.3,419.5 80.2,418.8 81.2,406.4 82.1,412.8 83.0,416.2 83.9,416.5 84.8,409.7 85.7,404.3 86.6,407.8 87.5,396.2 88.4,391.0 89.3,400.5 90.2,401.2 91.1,396.3 92.1,398.6 93.0,387.2 93.9,388.0 94.8,389.8 95.7,390.6 96.6,385.9 97.5,384.7 98.4,384.2 99.3,382.4 100.2,392.0 101.1,379.0 102.1,385.2 103.0,376.8 103.9,380.0 104.8,378.7 105.7,377.6 106.6,375.2 107.5,370.3 108.4,362.6 109.3,373.2 110.2,373.5 111.1,368.2 112.0,361.9 113.0,361.9 113.9,369.4 114.8,369.0 115.7,362.2 116.6,364.8 117.5,357.4 118.4,362.7 119.3,362.9 120.2,368.6 121.1,372.7 122.0,359.9 123.0,356.7 123.9,346.6 124.8,361.2 125.7,357.8 126.6,359.2 127.5,349.2 128.4,355.8 129.3,363.7 130.2,362.3 131.1,361.8 132.0,366.5 132.9,366.1 133.9,361.2 134.8,360.0 135.7,354.3 136.6,354.9 137.5,373.9 138.4,364.4 139.3,370.4 140.2,354.4 141.1,359.6 142.0,350.2 142.9,343.3 143.8,342.3 144.8,350.6 145.7,353.8 146.6,349.0 147.5,349.5 148.4,354.3 149.3,358.0 150.2,351.6 151.1,347.5 152.0,343.8 152.9,344.6 153.8,355.2 154.8,357.0 155.7,343.2 156.6,340.8 157.5,357.1 158.4,350.8 159.3,360.2 160.2,361.6 161.1,354.2 162.0,354.6 162.9,361.7 163.8,359.6 164.7,345.5 165.7,345.8 166.6,354.4 167.5,357.7 168.4,351.8 169.3,345.9 170.2,347.1 171.1,358.1 172.0,348.8 172.9,348.6 173.8,350.6 174.7,359.2 175.7,364.1 176.6,363.7 177.5,354.1 178.4,350.2 179.3,350.7 180.2,347.4 181.1,343.0 182.0,350.1 182.9,362.5 183.8,343.4 184.7,343.6 185.6,352.1 186.6,345.5 187.5,352.1 188.4,349.9 189.3,342.8 190.2,340.2 191.1,336.5 192.0,351.1 192.9,361.3 193.8,350.7 194.7,347.9 195.6,359.4 196.5,349.1 197.5,343.3 198.4,345.3 199.3,342.9 200.2,350.3 201.1,355.0 202.0,353.5 202.9,345.7 203.8,346.6 204.7,352.4 205.6,354.9 206.5,354.7 207.5,352.3 208.4,354.7 209.3,354.2 210.2,355.2 211.1,359.4 212.0,346.9 212.9,346.9 213.8,358.3 214.7,346.6 215.6,343.6 216.5,344.1 217.4,347.3 218.4,351.0 219.3,346.2 220.2,349.9 221.1,344.5 222.0,348.3 222.9,354.5 223.8,348.6 224.7,347.7 225.6,347.1 226.5,363.0 227.4,352.7 228.3,354.5 229.3,348.4 230.2,345.9 231.1,344.0 232.0,349.4 232.9,350.8 233.8,356.6 234.7,352.6 235.6,344.4 236.5,349.1 237.4,342.5 238.3,344.2 239.3,349.3 240.2,345.8 241.1,350.3 242.0,344.6 242.9,353.7 243.8,351.9 244.7,361.2 245.6,352.4 246.5,354.9 247.4,358.0 248.3,349.7 249.2,357.2 250.2,348.7 251.1,345.6 252.0,356.0 252.9,349.5 253.8,350.2 254.7,349.5 255.6,349.9 256.5,342.2 257.4,349.0 258.3,347.4 259.2,347.0 260.2,352.7 261.1,349.5 262.0,343.4 262.9,345.5 263.8,336.2 264.7,338.2 265.6,334.0 266.5,338.3 267.4,344.8 268.3,335.8 269.2,336.8 270.1,331.9 271.1,332.4 272.0,346.4 272.9,348.7 273.8,355.7 274.7,344.3 275.6,336.8 276.5,334.6 277.4,339.7 278.3,342.0 279.2,338.1 280.1,336.3 281.0,339.2 282.0,339.8 282.9,341.1 283.8,329.4 284.7,336.2 285.6,338.6 286.5,334.1 287.4,334.4 288.3,342.1 289.2,346.3 290.1,341.5 291.0,344.4 292.0,338.3 292.9,326.7 293.8,332.7 294.7,332.1 295.6,339.8 296.5,329.7 297.4,331.0 298.3,340.8 299.2,348.8 300.1,340.8 301.0,343.3 301.9,346.0 302.9,347.1 303.8,333.8 304.7,331.1 305.6,332.9 306.5,342.0 307.4,346.1 308.3,341.7 309.2,337.1 310.1,338.5 311.0,338.8 311.9,342.8 312.9,341.6 313.8,342.6 314.7,346.2 315.6,346.3 316.5,350.5 317.4,342.0 318.3,343.9 319.2,332.2 320.1,335.7 321.0,335.4 321.9,341.7 322.8,336.8 323.8,339.4 324.7,342.4 325.6,339.2 326.5,351.7 327.4,336.7 328.3,341.3 329.2,343.6 330.1,328.6 331.0,336.4 331.9,333.2 332.8,338.1 333.7,334.7 334.7,335.6 335.6,345.5 336.5,346.5 337.4,343.3 338.3,344.0 339.2,345.0 340.1,345.1 341.0,346.0 341.9,340.2 342.8,339.5 343.7,341.5 344.7,342.6 345.6,327.8 346.5,331.1 347.4,348.8 348.3,346.5 349.2,334.9 350.1,327.2 351.0,331.0 351.9,344.9 352.8,331.9 353.7,328.6 354.6,331.1 355.6,345.8 356.5,337.9 357.4,350.2 358.3,336.8 359.2,341.2 360.1,349.1 361.0,328.3 361.9,327.2 362.8,338.6 363.7,337.5 364.6,335.0 365.5,351.3 366.5,341.4 367.4,338.8 368.3,336.2 369.2,340.6 370.1,331.6 371.0,332.1 371.9,334.3 372.8,348.1 373.7,341.6 374.6,339.5 375.5,343.6 376.5,348.1 377.4,352.2 378.3,342.6 379.2,343.8 380.1,349.5 381.0,349.6 381.9,351.8 382.8,354.4 383.7,339.3 384.6,338.4 385.5,337.8 386.4,337.0 387.4,336.1 388.3,344.5 389.2,331.6 390.1,329.7 391.0,323.7 391.9,321.7 392.8,324.4 393.7,332.5 394.6,336.5 395.5,334.0 396.4,333.3 397.4,330.3 398.3,319.1 399.2,320.9 400.1,336.6 401.0,331.6 401.9,328.3 402.8,336.1 403.7,325.1 404.6,324.8 405.5,325.5 406.4,333.3 407.3,333.6 408.3,330.3 409.2,326.4 410.1,326.2 411.0,327.1 411.9,331.2 412.8,326.2 413.7,332.6 414.6,330.2 415.5,322.2 416.4,326.4 417.3,325.6 418.2,318.9 419.2,322.7 420.1,317.0 421.0,319.3 421.9,328.5 422.8,331.4 423.7,328.6 424.6,325.3 425.5,317.0 426.4,316.7 427.3,322.3 428.2,315.8 429.2,319.1 430.1,319.1 431.0,323.0 431.9,321.1 432.8,321.4 433.7,324.8 434.6,325.2 435.5,322.2 436.4,322.4 437.3,316.6 438.2,326.2 439.1,321.7 440.1,319.3 441.0,311.8 441.9,312.1 442.8,304.6 443.7,306.6 444.6,312.0 445.5,319.7 446.4,327.1 447.3,317.2 448.2,321.4 449.1,327.6 450.1,329.5 451.0,320.9 451.9,314.3 452.8,318.4 453.7,319.9 454.6,318.4 455.5,323.8 456.4,325.2 457.3,310.9 458.2,312.7 459.1,313.3 460.0,310.7 461.0,324.3 461.9,319.5 462.8,317.8 463.7,322.8 464.6,315.2 465.5,314.8 466.4,70.8 467.3,73.1 468.2,75.4 469.1,84.7 470.0,87.1 470.9,77.6 471.9,75.6 472.8,78.8 473.7,79.0 474.6,84.5 475.5,84.2 476.4,87.0 477.3,80.7 478.2,83.8 479.1,84.7 480.0,79.2 480.9,75.0 481.9,84.0 482.8,82.9 483.7,77.9 484.6,80.5 485.5,74.2 486.4,78.3 487.3,80.3 488.2,77.5 489.1,71.0 490.0,76.6 490.9,77.3 491.8,81.4 492.8,89.8 493.7,87.1 494.6,75.2 495.5,76.7 496.4,76.0 497.3,78.2 498.2,84.9 499.1,82.1 500.0,84.9 500.9,83.1 501.8,85.4 502.7,81.3 503.7,81.3 504.6,82.2 505.5,77.5 506.4,78.3 507.3,79.2 508.2,74.6 509.1,88.0 510.0,90.7 510.9,77.1 511.8,73.2 512.7,70.0 513.7,74.5 514.6,77.3 515.5,82.6 516.4,78.3 517.3,86.2 518.2,99.6 519.1,88.0 520.0,84.0 520.9,83.9 521.8,93.4 522.7,85.6 523.6,79.5 524.6,80.9 525.5,80.6 526.4,82.1 527.3,85.2 528.2,82.7 529.1,83.6 530.0,85.4 530.9,79.3 531.8,79.2 532.7,88.7 533.6,92.9 534.6,87.8 535.5,75.5 536.4,80.3 537.3,83.3 538.2,85.4 539.1,90.1 540.0,92.2 540.9,82.7 541.8,82.3 542.7,92.4 543.6,90.7 544.5,87.8 545.5,82.5 546.4,78.5 547.3,74.6 548.2,73.4 549.1,74.0 550.0,75.8 550.9,84.6 551.8,83.8 552.7,76.9 553.6,77.2 554.5,84.2 555.4,93.1 556.4,92.4 557.3,79.2 558.2,78.4 559.1,83.0 560.0,86.0 560.9,90.2 561.8,81.7 562.7,74.0 563.6,72.2 564.5,81.7 565.4,82.5 566.4,84.1 567.3,76.5 568.2,73.0 569.1,81.8 570.0,81.7 570.9,317.0 571.8,323.3 572.7,320.5 573.6,319.2 574.5,309.4 575.4,316.2 576.3,311.6 577.3,309.9 578.2,318.7 579.1,313.7 580.0,308.7 580.9,295.8 581.8,298.1 582.7,309.7 583.6,311.8 584.5,315.3 585.4,315.6 586.3,309.6 587.2,314.8 588.2,306.6 589.1,310.7 590.0,315.7 590.9,318.1 591.8,317.1 592.7,315.5 593.6,316.9 594.5,318.9 595.4,310.6 596.3,320.4 597.2,314.6 598.2,311.7 599.1,320.5 600.0,315.6 600.9,309.7 601.8,328.4 602.7,319.4 603.6,328.6 604.5,322.6 605.4,321.4 606.3,318.2 607.2,313.8 608.1,310.0 609.1,311.3 610.0,316.3 610.9,317.0 611.8,322.2 612.7,328.5 613.6,324.2 614.5,321.8 615.4,325.0 616.3,321.0 617.2,326.9 618.1,328.6 619.1,325.2 620.0,315.9 620.9,317.1 621.8,314.2 622.7,318.4 623.6,327.3 624.5,329.6 625.4,327.5 626.3,327.4 627.2,317.7 628.1,314.4 629.0,304.3 630.0,312.4 630.9,323.7 631.8,315.7 632.7,326.2 633.6,318.1 634.5,317.4 635.4,330.6 636.3,324.1 637.2,328.3 638.1,316.6 639.0,320.6 639.9,317.7 640.9,324.4 641.8,328.5 642.7,315.7 643.6,320.1 644.5,321.6 645.4,317.8 646.3,316.2 647.2,318.7 648.1,313.4 649.0,324.4 649.9,336.7 650.9,336.8 651.8,329.4 652.7,329.8 653.6,323.4 654.5,318.9 655.4,320.8 656.3,320.5 657.2,322.5 658.1,320.7 659.0,312.2 659.9,327.2 660.8,325.5 661.8,320.8 662.7,325.7 663.6,314.6 664.5,320.7 665.4,324.5 666.3,325.9 667.2,328.4 668.1,338.1 669.0,330.4 669.9,324.7 670.8,329.8 671.8,325.7 672.7,322.9 673.6,322.7 674.5,324.3 675.4,327.1 676.3,334.6 677.2,325.2 678.1,333.0 679.0,331.0 679.9,328.8 680.8,313.9 681.7,316.3 682.7,337.5 683.6,331.8 684.5,331.6 685.4,327.2 686.3,340.0 687.2,325.2 688.1,322.6 689.0,333.3 689.9,327.5 690.8,332.2 691.7,325.3 692.6,318.1 693.6,318.7 694.5,334.0 695.4,333.4 696.3,319.9 697.2,322.4 698.1,325.8 699.0,328.4 699.9,338.2 700.8,324.2 701.7,323.2 702.6,334.3 703.6,324.8 704.5,324.6 705.4,332.9 706.3,329.0 707.2,332.3 708.1,328.8 709.0,329.2 709.9,339.1 710.8,334.9 711.7,335.3 712.6,323.4 713.5,322.6 714.5,320.0 715.4,325.0 716.3,331.5 717.2,329.6 718.1,341.3 719.0,337.3 719.9,342.5 720.8,328.4 721.7,328.2 722.6,327.3 723.5,330.0 724.4,341.8 725.4,335.5 726.3,337.4 727.2,326.6 728.1,324.8 729.0,342.7 729.9,355.7 730.8,342.7 731.7,337.7 732.6,338.5 733.5,338.5 734.4,326.3 735.4,322.0 736.3,332.6 737.2,326.2 738.1,335.1 739.0,348.1 739.9,338.7 740.8,340.3 741.7,337.3 742.6,338.0 743.5,340.0 744.4,340.3 745.3,337.3 746.3,332.2 747.2,344.6 748.1,340.0 749.0,343.5 749.9,333.3 750.8,332.2 751.7,331.1 752.6,339.1 753.5,338.6 754.4,341.6 755.3,337.9 756.3,343.1 757.2,326.5 758.1,319.8 759.0,328.9 759.9,334.2 760.8,341.8 761.7,328.6 762.6,332.4 763.5,328.8 764.4,328.2 765.3,347.4 766.2,342.6 767.2,346.6 768.1,333.6 769.0,331.2 769.9,342.4 770.8,337.8 771.7,334.5 772.6,333.9 773.5,340.4 774.4,334.3 775.3,335.1 776.2,338.5 777.1,349.8 778.1,340.6 779.0,327.6 779.9,325.3 780.8,333.7 781.7,335.7 782.6,337.2 783.5,344.0 784.4,344.2 785.3,342.0 786.2,333.9 787.1,332.1 788.1,337.1 789.0,340.6 789.9,337.6 790.8,343.8 791.7,338.8 792.6,330.2 793.5,337.0 794.4,333.7 795.3,333.2 796.2,330.8 797.1,343.0 798.0,346.7 799.0,342.8 799.9,343.3 800.8,347.7 801.7,340.0 802.6,330.4 803.5,327.3 804.4,327.9 805.3,328.9 806.2,339.4 807.1,337.8 808.0,338.0 809.0,327.5 809.9,338.3 810.8,340.6 811.7,341.2 812.6,344.8 813.5,342.8 814.4,340.3 815.3,336.7 816.2,334.5 817.1,337.8 818.0,337.8 818.9,336.9 819.9,340.5 820.8,347.6 821.7,340.6 822.6,337.6 823.5,345.5 824.4,343.5 825.3,335.3 826.2,335.7 827.1,343.9 828.0,344.7 828.9,336.5 829.8,338.9 830.8,347.4 831.7,334.0 832.6,339.3 833.5,342.4 834.4,341.8 835.3,342.7 836.2,342.2 837.1,344.1 838.0,341.1 838.9,332.5 839.8,339.7 840.8,336.5 841.7,338.6 842.6,342.3 843.5,345.8 844.4,343.8 845.3,346.0 846.2,347.0 847.1,344.0 848.0,347.5 848.9,338.5 849.8,331.9 850.7,331.5 851.7,338.6 852.6,347.8 853.5,345.8 854.4,342.7 855.3,340.6 856.2,341.3 857.1,334.4 858.0,332.1 858.9,333.3 859.8,334.9 860.7,342.8 861.6,340.4 862.6,338.0 863.5,329.7 864.4,336.1 865.3,344.6 866.2,347.4 867.1,341.8 868.0,346.5 868.9,350.7 869.8,335.2 870.7,334.9 871.6,334.5 872.6,345.4 873.5,349.0 874.4,346.4 875.3,337.4 876.2,340.6 877.1,347.5 878.0,349.9 878.9,349.8 879.8,345.4 880.7,349.3 881.6,348.5 882.5,342.6 883.5,342.3 884.4,339.8 885.3,337.4 886.2,344.9 887.1,342.4 888.0,343.8 888.9,353.9 889.8,353.3 890.7,342.8 891.6,345.9 892.5,345.8 893.5,343.2 894.4,344.8 895.3,354.9 896.2,348.6 897.1,353.3 898.0,357.6 898.9,351.8 899.8,350.1 900.7,345.2 901.6,347.3 902.5,337.6 903.4,343.5 904.4,348.6 905.3,348.8 906.2,352.2 907.1,357.3 908.0,357.8 908.9,349.7 909.8,348.8 910.7,348.0 911.6,335.4 912.5,343.6 913.4,347.0 914.3,341.0 915.3,345.7 916.2,351.8 917.1,357.4 918.0,348.9 918.9,355.7 919.8,359.7 920.7,345.4 921.6,338.7 922.5,345.4 923.4,358.9 924.3,351.3 925.3,362.0 926.2,362.7 927.1,367.2 928.0,358.2 928.9,367.0 929.8,370.1 930.7,368.9 931.6,375.3 932.5,366.4 933.4,358.3 934.3,358.0 935.2,367.0 936.2,363.9 937.1,372.9 938.0,373.9 938.9,374.3 939.8,373.1 940.7,369.0 941.6,378.6 942.5,394.3 943.4,380.9 944.3,375.6 945.2,380.3 946.2,381.5 947.1,385.0 948.0,390.0 948.9,390.0 949.8,391.8 950.7,396.6 951.6,391.0 952.5,406.2 953.4,409.6 954.3,410.5 955.2,406.8 956.1,399.2 957.1,412.2 958.0,412.0 958.9,426.8 959.8,418.9 960.7,431.2 961.6,433.8 962.5,427.7 963.4,433.0 964.3,424.5 965.2,420.3 966.1,435.2 967.0,446.8 968.0,439.7 968.9,440.5 969.8,451.3 970.7,449.0 971.6,468.9 972.5,460.7"/>
</g>
<path d="M95.0 54.3v9M95.0 517.7v-9M201.6 54.3v9M201.6 517.7v-9M307.7 54.3v9M307.7 517.7v-9M412.9 54.3v9M412.9 517.7v-9M518.1 54.3v9M518.1 517.7v-9M624.4 54.3v9M624.4 517.7v-9M729.5 54.3v9M729.5 517.7v-9M834.7 54.3v9M834.7 517.7v-9M941.5 54.3v9M941.5 517.7v-9M64.8 459.3h9M972.5 459.3h-9M64.8 401.7h9M972.5 401.7h-9M64.8 343.9h9M972.5 343.9h-9M64.8 286.5h9M972.5 286.5h-9M64.8 228.0h9M972.5 228.0h-9M64.8 170.5h9M972.5 170.5h-9M64.8 112.0h9M972.5 112.0h-9" stroke="#a8a8a8" stroke-width="1.2" fill="none"/>
<rect x="64.8" y="54.3" width="907.7" height="463.4" fill="none" stroke="#a8a8a8" stroke-width="1.3"/>
<g font-family="Liberation Sans, Arial, sans-serif" font-size="13.1" fill="#a6a6a6">
<text x="95.4" y="537.2" text-anchor="middle">-400</text>
<text x="201.2" y="537.2" text-anchor="middle">-300</text>
<text x="307.1" y="537.2" text-anchor="middle">-200</text>
<text x="412.9" y="537.2" text-anchor="middle">-100</text>
<text x="522.8" y="537.2" text-anchor="middle">0</text>
<text x="626.1" y="537.2" text-anchor="middle">100</text>
<text x="731.9" y="537.2" text-anchor="middle">200</text>
<text x="837.8" y="537.2" text-anchor="middle">300</text>
<text x="943.6" y="537.2" text-anchor="middle">400</text>
<text x="58.6" y="523.7" text-anchor="end">-130</text>
<text x="58.6" y="465.3" text-anchor="end">-120</text>
<text x="58.6" y="407.7" text-anchor="end">-110</text>
<text x="58.6" y="349.9" text-anchor="end">-100</text>
<text x="58.6" y="292.5" text-anchor="end">-90</text>
<text x="58.6" y="234.0" text-anchor="end">-80</text>
<text x="58.6" y="176.5" text-anchor="end">-70</text>
<text x="58.6" y="118.0" text-anchor="end">-60</text>
<text x="58.6" y="60.3" text-anchor="end">-50</text>
</g>
<text x="460.5" y="556.1" textLength="116.6" font-family="Liberation Sans, Arial, sans-serif" font-size="15" fill="#b4b4b4">Frequency (MHz)</text>
<text transform="translate(26.3 285) rotate(-90)" text-anchor="middle" font-family="Liberation Sans, Arial, sans-serif" font-size="15" fill="#b4b4b4" letter-spacing="0.3">dBm</text>
<rect x="740.8" y="68" width="218" height="60.6" fill="#000" stroke="#c8c8c8" stroke-width="1.1"/>
<path d="M746.8 79.3H795.4" stroke="#f4f02c" stroke-width="2"/>
<path d="M746.8 99.4H795.4" stroke="#1a9fff" stroke-width="1.1"/>
<path d="M746.8 117.5H795.4" stroke="#ff6a2c" stroke-width="1.1"/>
<g font-family="Liberation Sans, Arial, sans-serif" font-size="12.8" fill="#dedede">
<text x="799.3" y="84.4" textLength="49.4">No DPD</text>
<text x="799.3" y="104.2" textLength="152.7">Memory Polynomial DPD</text>
<text x="799.3" y="123.3" textLength="127.4">Neural Network DPD</text>
</g>
</svg>
</body></html>
